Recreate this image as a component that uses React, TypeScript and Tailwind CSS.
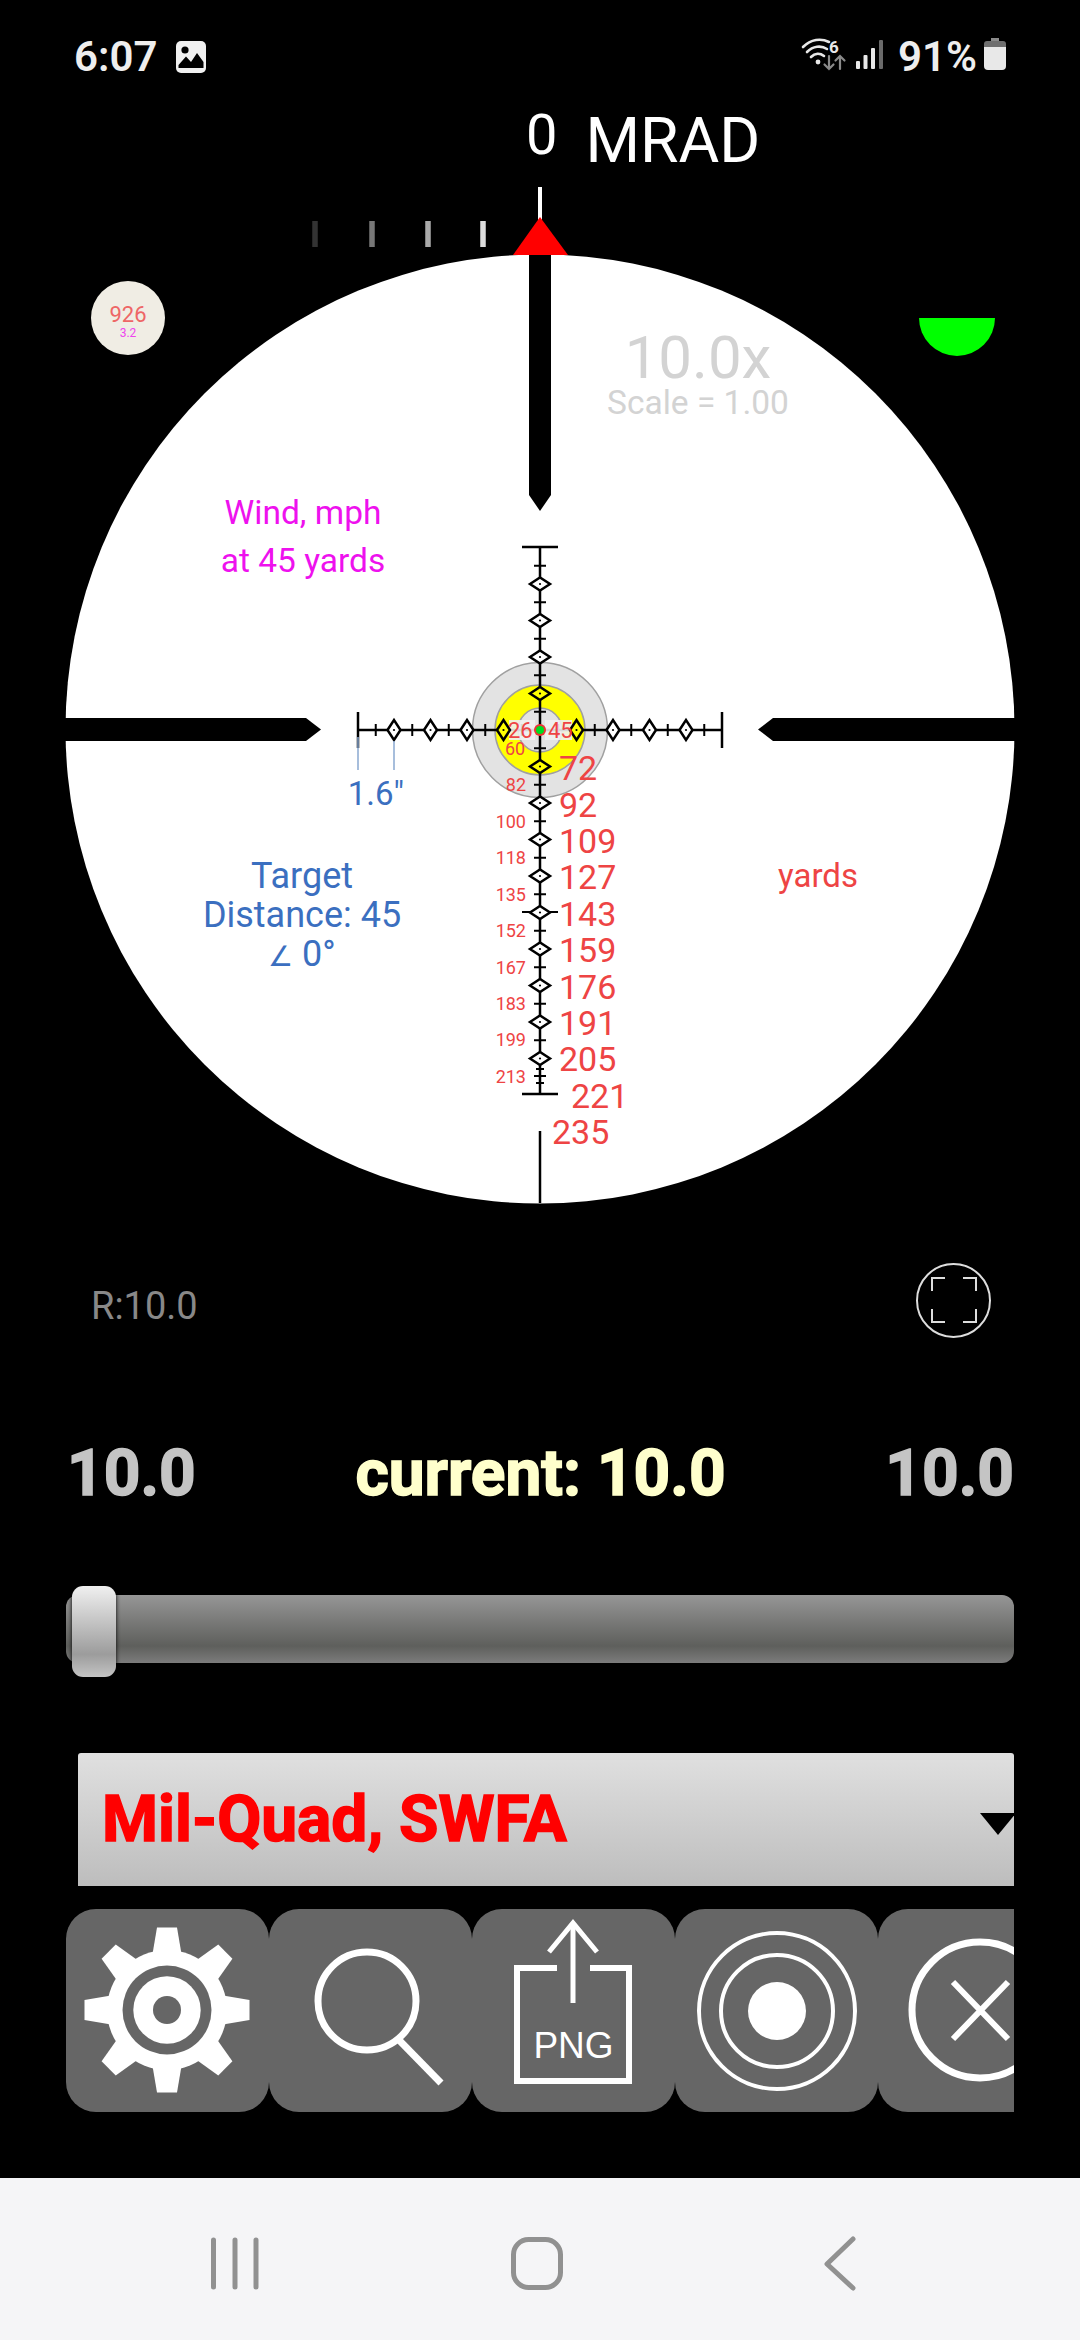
const roboto = "font-['Roboto',sans-serif]";

function Wifi() {
  return (
    <svg className="overflow-visible" width="44" height="32" viewBox="0 0 44 32" fill="none" strokeLinecap="round">
      <path d="M1 9C9 1 19 0 27 4" stroke="#e8e8e8" strokeWidth="2.6" />
      <path d="M5 14C11 8 19 7 25 11" stroke="#e8e8e8" strokeWidth="2.6" />
      <path d="M9 19C13 15 18 15 22 18" stroke="#e8e8e8" strokeWidth="2.6" />
      <circle cx="16" cy="24" r="2.4" fill="#e8e8e8" />
      <path d="M27 18V31M22.5 26.5 27 31 31.5 26.5" stroke="#8a8a8a" strokeWidth="2.2" />
      <path d="M38 31V18M33.5 22.5 38 18 42.5 22.5" stroke="#8a8a8a" strokeWidth="2.2" />
      <text x="27" y="15" fontSize="17" fontWeight="700" fill="#e8e8e8" fontFamily="Roboto, sans-serif">6</text>
    </svg>
  );
}

function Signal() {
  return (
    <svg width="28" height="29" viewBox="0 0 28 29">
      <rect x="0" y="21" width="4" height="8" rx="1" fill="#e8e8e8" />
      <rect x="7.5" y="15" width="4" height="14" rx="1" fill="#e8e8e8" />
      <rect x="15" y="8" width="4" height="21" rx="1" fill="#e8e8e8" />
      <rect x="23" y="0" width="4" height="29" rx="1" fill="#6a6a6a" />
    </svg>
  );
}

function StatusBar() {
  return (
    <div className="flex h-[90px] items-start pt-[38px] pl-[74px] pr-[74px]">
      <span className={`${roboto} text-[42px] leading-[38px] font-semibold text-[#eeeeee]`}>6:07</span>
      <svg className="ml-[19px] mt-[3px]" width="30" height="32" viewBox="0 0 30 32">
        <rect x="0" y="0" width="30" height="32" rx="5" fill="#f0f0f0" />
        <circle cx="9" cy="9" r="3.6" fill="#000" />
        <path d="M2.5 27V24L10 15.5 15 21 21 12 27.5 21V27Z" fill="#000" />
      </svg>
      <div className="ml-auto flex items-start">
        <Wifi />
        <div className="ml-[10px] mt-[2px]"><Signal /></div>
        <span className={`${roboto} ml-[14px] text-[42px] leading-[38px] font-semibold text-[#eeeeee]`}>91%</span>
        <svg className="ml-[7px]" width="22" height="32" viewBox="0 0 22 32">
          <path d="M7 0H15V3H7Z" fill="#8a8a8a" />
          <path d="M3 3H19A3 3 0 0 1 22 6V9H0V6A3 3 0 0 1 3 3Z" fill="#6f6f6f" />
          <path d="M0 9H22V28A4 4 0 0 1 18 32H4A4 4 0 0 1 0 28Z" fill="#e8e8e8" />
        </svg>
      </div>
    </div>
  );
}

const CX = 540;
const CY = 730;
const MIL = 36.5;

function Diamond({ x, y, horizontal, fill }: { x: number; y: number; horizontal?: boolean; fill: string }) {
  const a = horizontal ? 6.5 : 10;
  const b = horizontal ? 10 : 6.5;
  return (
    <g>
      <path d={`M${x - a} ${y}L${x} ${y - b}L${x + a} ${y}L${x} ${y + b}Z`} fill={fill} stroke="#000" strokeWidth="2.5" />
      <circle cx={x} cy={y} r="1.1" fill="#000" />
    </g>
  );
}

function Reticle() {
  const diamonds = [1, 2, 3, 4];
  const ticks = [0.5, 1.5, 2.5, 3.5, 4.5];
  const downDiamonds = [1, 2, 3, 4, 5, 6, 7, 8, 9];
  const downTicks = [0.5, 1.5, 2.5, 3.5, 4.5, 5.5, 6.5, 7.5, 8.5];
  const leftLabels: [string, number][] = [
    ["82", 785], ["100", 822], ["118", 858], ["135", 895], ["152", 931],
    ["167", 968], ["183", 1004], ["199", 1040], ["213", 1077],
  ];
  const rightLabels: [string, number, number][] = [
    ["72", 559, 768], ["92", 559, 805], ["109", 559, 841], ["127", 559, 877], ["143", 559, 914],
    ["159", 559, 950], ["176", 559, 987], ["191", 559, 1023], ["205", 559, 1059],
    ["221", 571, 1096], ["235", 552, 1132],
  ];
  const fillFor = (d: number) => (d === 1 ? "#ffff00" : "#ffffff");
  return (
    <svg className="block" width="1080" height="1030" viewBox="0 180 1080 1030" fontFamily="Roboto, sans-serif">
      {/* top scale */}
      <line x1={CX} x2={CX} y1="187" y2="220" stroke="#fff" strokeWidth="4" />
      {[[315, "#333333"], [372, "#777777"], [428, "#aaaaaa"], [483, "#dddddd"]].map(([x, c]) => (
        <rect key={x as number} x={(x as number) - 2.75} y="221" width="5.5" height="26" fill={c as string} />
      ))}
      <circle cx={CX} cy="729" r="474.5" fill="#fff" />
      {/* heavy posts */}
      <path d="M529 255H551V495L540 511 529 495Z" fill="#000" />
      <path d="M65 718H306L321 729.5 306 741H65Z" fill="#000" />
      <path d="M1015 718H773L758 729.5 773 741H1015Z" fill="#000" />
      <path d="M513 255L540 217 568 255Z" fill="#f00" />
      <line x1={CX} x2={CX} y1="1131" y2="1203" stroke="#000" strokeWidth="2.5" />

      {/* rings */}
      <circle cx={CX} cy={CY} r="67.5" fill="#e3e3e3" stroke="#a0a0a0" strokeWidth="1.5" />
      <circle cx={CX} cy={CY} r="45" fill="#ffff00" stroke="#a0a0a0" strokeWidth="1.5" />
      <circle cx={CX} cy={CY} r="22" fill="#e3e3e3" stroke="#a0a0a0" strokeWidth="1.5" />

      {/* horizontal reticle */}
      <line x1="358" x2="722" y1={CY} y2={CY} stroke="#000" strokeWidth="2.5" />
      <line x1="358" x2="358" y1="712" y2="748" stroke="#000" strokeWidth="2.5" />
      <line x1="722" x2="722" y1="712" y2="748" stroke="#000" strokeWidth="2.5" />
      {ticks.flatMap((t) => [-1, 1].map((s) => (
        <line key={`h${t}${s}`} x1={CX + s * t * MIL} x2={CX + s * t * MIL} y1={CY - 6} y2={CY + 6} stroke="#000" strokeWidth="2" />
      )))}

      {/* pale plates behind the two centre readings */}
      <rect x="509" y="720" width="26" height="20" fill="#f0f0f0" fillOpacity="0.9" />
      <rect x="545" y="720" width="27" height="20" fill="#f0f0f0" fillOpacity="0.9" />

      {/* vertical reticle */}
      <line x1={CX} x2={CX} y1="547" y2="1094" stroke="#000" strokeWidth="2.5" />
      <line x1="522" x2="558" y1="547" y2="547" stroke="#000" strokeWidth="2.5" />
      <line x1="522" x2="558" y1="1094" y2="1094" stroke="#000" strokeWidth="2.5" />
      <line x1="522" x2="558" y1="912" y2="912" stroke="#000" strokeWidth="2" />
      {ticks.map((t) => (
        <line key={`u${t}`} x1={CX - 6} x2={CX + 6} y1={CY - t * MIL} y2={CY - t * MIL} stroke="#000" strokeWidth="2" />
      ))}
      {downTicks.map((t) => (
        <line key={`d${t}`} x1={CX - 6} x2={CX + 6} y1={CY + t * MIL} y2={CY + t * MIL} stroke="#000" strokeWidth="2" />
      ))}
      <line x1={CX - 4} x2={CX + 4} y1="1069" y2="1069" stroke="#000" strokeWidth="2" />
      <line x1={CX - 6} x2={CX + 6} y1="1076" y2="1076" stroke="#000" strokeWidth="2" />
      <line x1={CX - 4} x2={CX + 4} y1="1083" y2="1083" stroke="#000" strokeWidth="2" />

      {diamonds.map((d) => (
        <g key={`dh${d}`}>
          <Diamond x={CX - d * MIL} y={CY} horizontal fill={fillFor(d)} />
          <Diamond x={CX + d * MIL} y={CY} horizontal fill={fillFor(d)} />
        </g>
      ))}
      {diamonds.map((d) => (
        <Diamond key={`du${d}`} x={CX} y={CY - d * MIL} fill={fillFor(d)} />
      ))}
      {downDiamonds.map((d) => (
        <Diamond key={`dd${d}`} x={CX} y={CY + d * MIL} fill={fillFor(d)} />
      ))}

      <circle cx={CX} cy={CY} r="6" fill="#ee3333" />
      <circle cx={CX} cy={CY} r="4" fill="#00dd22" />

      {/* measurement marks */}
      <line x1="358" x2="358" y1="737" y2="770" stroke="#8aa8d0" strokeWidth="1.5" />
      <line x1="394" x2="394" y1="741" y2="770" stroke="#8aa8d0" strokeWidth="1.5" />

      {/* labels */}
      <g fill="#ee4444">
        <text x="508" y="738" fontSize="22">26</text>
        <text x="548" y="738" fontSize="22">45</text>
        <text x="505" y="755" fontSize="18">60</text>
        {leftLabels.map(([t, y]) => (
          <text key={t} x="526" y={y + 6} fontSize="18" textAnchor="end">{t}</text>
        ))}
        {rightLabels.map(([t, x, y]) => (
          <text key={t} x={x} y={y + 12} fontSize="34">{t}</text>
        ))}
        <text x="818" y="887" fontSize="33" textAnchor="middle">yards</text>
      </g>
      <g fill="#3b6fc0" textAnchor="middle">
        <text x="376" y="805" fontSize="33">1.6"</text>
        <text x="302" y="888" fontSize="36">Target</text>
        <text x="302" y="927" fontSize="36">Distance: 45</text>
        <text x="302" y="966" fontSize="36"><tspan fontSize="28">∠</tspan> 0°</text>
      </g>
      <g fill="#ee11ee" fontSize="33.5" textAnchor="middle">
        <text x="303" y="524">Wind, mph</text>
        <text x="303" y="572">at 45 yards</text>
      </g>
      <g fill="#d3d3d3" textAnchor="middle">
        <text x="698" y="378" fontSize="60">10.0x</text>
        <text x="698" y="414" fontSize="33.5">Scale = 1.00</text>
      </g>
    </svg>
  );
}

function Gear() {
  const teeth = [0, 45, 90, 135, 180, 225, 270, 315];
  return (
    <svg width="203" height="203" viewBox="0 0 203 203">
      <g transform="translate(101 101)">
        {teeth.map((a) => (
          <path key={a} d="M-10 -82.5H10L14.5 -56H-14.5Z" fill="#fff" transform={`rotate(${a})`} />
        ))}
        <circle r="60" fill="#fff" />
        <circle r="44.5" fill="#666666" />
        <circle r="33.7" fill="#fff" />
        <circle r="14" fill="#666666" />
      </g>
    </svg>
  );
}

function Search() {
  return (
    <svg width="203" height="203" viewBox="0 0 203 203" fill="none" stroke="#fff" strokeWidth="7">
      <circle cx="98" cy="92" r="49" />
      <path d="M129 130L172 174" />
    </svg>
  );
}

function Png() {
  return (
    <div className="relative h-[203px] w-[203px]">
      <svg className="absolute inset-0" width="203" height="203" viewBox="0 0 203 203" fill="none" stroke="#fff" strokeWidth="6">
        <path d="M85 59H45V172H157V59H118" />
        <path d="M101 94V15" strokeWidth="5" />
        <path d="M77 43L101 14L125 43" strokeWidth="5" />
      </svg>
      <span className="absolute left-0 right-0 top-[117px] text-center font-['Liberation_Sans',sans-serif] text-[37px] leading-[40px] text-white">PNG</span>
    </div>
  );
}

function Target() {
  return (
    <svg width="203" height="203" viewBox="0 0 203 203" fill="none" stroke="#fff" strokeWidth="4">
      <circle cx="102" cy="102" r="78" />
      <circle cx="102" cy="102" r="56" />
      <circle cx="102" cy="102" r="29" fill="#fff" stroke="none" />
    </svg>
  );
}

function Close() {
  return (
    <svg width="203" height="203" viewBox="0 0 203 203" fill="none" stroke="#fff">
      <circle cx="102" cy="101" r="68" strokeWidth="7" />
      <path d="M75 73L130 130M130 73L75 130" strokeWidth="6" />
    </svg>
  );
}

const buttons = [Gear, Search, Png, Target, Close];

export default function App() {
  return (
    <div className="flex h-[2340px] w-[1080px] flex-col overflow-hidden bg-black">
      <StatusBar />
      <div className="flex h-[90px] shrink-0 items-start pl-[526px]">
        <span className={`${roboto} mt-[17px] text-[56px] leading-[56px] text-white`}>0</span>
        <span className={`${roboto} ml-[28px] mt-[15px] text-[62.5px] leading-[72px] text-white`}>MRAD</span>
      </div>
      <div className="relative h-[1030px] shrink-0">
        <Reticle />
        <div className="absolute left-[91px] top-[101px] flex h-[74px] w-[74px] flex-col items-center justify-center rounded-full bg-[#f0ede4]">
          <span className={`${roboto} mt-[6px] text-[22px] leading-[24px] text-[#ee6666]`}>926</span>
          <span className={`${roboto} text-[12px] leading-[12px] text-[#ee44ee]`}>3.2</span>
        </div>
        <div className="absolute left-[919px] top-[138px] h-[38px] w-[76px] rounded-b-full bg-[#00ff00]" />
      </div>
      <div className="mt-[52px] flex h-[76px] items-center justify-between pl-[91px] pr-[89px]">
        <span className={`${roboto} mt-[13px] text-[38px] font-normal text-[#888888]`}>R:10.0</span>
        <div className="flex h-[75px] w-[75px] items-center justify-center rounded-full border-2 border-[#dddddd]">
          <svg width="46" height="46" viewBox="0 0 46 46" fill="none" stroke="#dddddd" strokeWidth="2">
            <path d="M1 14V1H14M32 1H45V14M45 32V45H32M14 45H1V32" />
          </svg>
        </div>
      </div>
      <div className={`${roboto} mt-[104px] flex h-[64px] items-center justify-between pl-[67px] pr-[66px] text-[64px] font-bold leading-[64px]`}>
        <span className="text-[#c4c4c4] [-webkit-text-stroke:1.5px_#c4c4c4]">10.0</span>
        <span className="text-[#ffffcc] [-webkit-text-stroke:1.5px_#ffffcc]">current: 10.0</span>
        <span className="text-[#c4c4c4] [-webkit-text-stroke:1.5px_#c4c4c4]">10.0</span>
      </div>
      <div className="relative mx-[66px] mt-[89px] h-[68px] rounded-[12px] bg-[linear-gradient(#969696_0%,#5e5f5c_75%,#7c7c7c_100%)]">
        <div className="absolute left-[6px] top-[-9px] h-[91px] w-[44px] rounded-[11px] bg-[linear-gradient(#f0f0f0_0%,#9c9c9c_75%,#c4c4c4_100%)] shadow-[0_0_4px_#000]" />
      </div>
      <div className="relative ml-[78px] mr-[66px] mt-[90px] flex h-[133px] items-center overflow-hidden rounded-t-[3px] bg-[linear-gradient(#e0e0e0,#bdbdbd)]">
        <span className={`${roboto} pl-[24px] text-[64px] font-bold text-[#ff0000] [-webkit-text-stroke:1.5px_#ff0000]`}>Mil-Quad, SWFA</span>
        <svg className="absolute left-[902px] top-[60px]" width="36" height="22" viewBox="0 0 36 22">
          <path d="M0 0H36L18 22Z" fill="#000" />
        </svg>
      </div>
      <div className="mx-[66px] mt-[23px] flex h-[203px] overflow-hidden">
        {buttons.map((B, i) => (
          <div key={i} className="h-[203px] w-[203px] shrink-0 rounded-[30px] bg-[#666666]"><B /></div>
        ))}
      </div>
      <div className="mt-auto flex h-[162px] items-center justify-center bg-[#f5f5f7]">
        <svg width="1080" height="162" viewBox="0 2178 1080 162" fill="none" stroke="#919191" strokeWidth="5" strokeLinecap="round" strokeLinejoin="round">
          <path d="M213.5 2240V2287M235 2240V2287M256 2240V2287" />
          <rect x="513.5" y="2239.5" width="47" height="48" rx="15" />
          <path d="M853 2239L827 2264L853 2288" />
        </svg>
      </div>
    </div>
  );
}
